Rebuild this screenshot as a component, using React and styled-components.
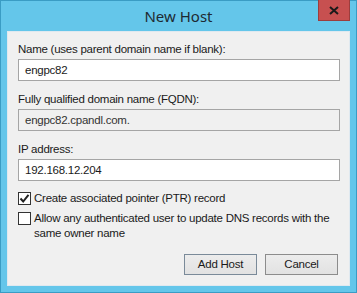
import React from 'react';
import styled, { createGlobalStyle } from 'styled-components';

const GlobalStyle = createGlobalStyle`
    html, body {
        margin: 0;
        padding: 0;
        background: #ffffff;
    }
`;

const font = `"Liberation Sans", Arial, sans-serif`;
const titleFont = `"Noto Sans", "Open Sans", sans-serif`;

const Window = styled.div`
    box-sizing: border-box;
    width: 357px;
    height: 293px;
    background: #64c6ea;
    border: 1px solid #3a9cc4;
    display: flex;
    flex-direction: column;
    font-family: ${font};
    font-size: 11.5px;
    letter-spacing: -0.25px;
`;

const TitleBar = styled.div`
    position: relative;
    height: 30px;
    flex: none;
    display: flex;
    align-items: center;
    justify-content: center;
`;

const Title = styled.div`
    font-family: ${titleFont};
    font-size: 15px;
    letter-spacing: 0;
    color: #1e2a33;
    margin-top: -1px;
`;

const CloseButton = styled.div`
    position: absolute;
    top: -1px;
    right: 6px;
    width: 32px;
    height: 21px;
    background: #c75050;
    border: 1px solid #9c3d3d;
    border-top: none;
    box-sizing: border-box;
    display: flex;
    align-items: center;
    justify-content: center;
`;

const Client = styled.div`
    flex: 1;
    margin: 0 6px 6px 6px;
    background: #f0f0f0;
    border: 1px solid #dfe9f0;
    padding: 10px 9px 0 10px;
    display: flex;
    flex-direction: column;
`;

const Label = styled.div`
    line-height: 15px;
    color: #1a1a1a;
    margin-top: ${p => p.$first ? '0' : '11px'};
    margin-bottom: 2px;
`;

const Input = styled.div`
    box-sizing: border-box;
    height: 22px;
    border: 1px solid #a5a5a5;
    background: ${p => p.$disabled ? '#f0f0f0' : '#ffffff'};
    padding: 0 6px;
    line-height: 20px;
    color: ${p => p.$disabled ? '#333' : '#1a1a1a'};
`;

const CheckRow = styled.div`
    display: flex;
    align-items: flex-start;
    gap: 3px;
    margin-top: ${p => p.$gap}px;
`;

const Box = styled.div`
    box-sizing: border-box;
    width: 13px;
    height: 13px;
    margin-top: 1px;
    flex: none;
    border: 1px solid #333333;
    background: #ffffff;
    display: flex;
    align-items: center;
    justify-content: center;
`;

const CheckText = styled.div`
    line-height: 15px;
    color: #1a1a1a;
`;

const ButtonRow = styled.div`
    display: flex;
    justify-content: flex-end;
    gap: 8px;
    margin-top: 13px;
    padding-right: 2px;
`;

const Button = styled.div`
    box-sizing: border-box;
    width: 73px;
    height: 21px;
    border: 1px solid ${p => p.$default ? '#7a8a99' : '#8c8c8c'};
    background: linear-gradient(#ececec, #e2e2e2);
    line-height: 19px;
    text-align: center;
    color: #1a1a1a;
`;

const Check = () => (
    <svg width="11" height="11" viewBox="0 0 11 11">
        <path d="M1.5 5.5 L4.2 8.5 L9.5 1.8" fill="none" stroke="#222" strokeWidth="2" />
    </svg>
);

export default function App() {
    return (
        <>
            <GlobalStyle />
            <Window>
                <TitleBar>
                    <Title>New Host</Title>
                    <CloseButton>
                        <svg width="10" height="9" viewBox="0 0 10 9">
                            <path d="M1 1 L9 8 M9 1 L1 8" stroke="#1a1a1a" strokeWidth="2" />
                        </svg>
                    </CloseButton>
                </TitleBar>
                <Client>
                    <Label $first>Name (uses parent domain name if blank):</Label>
                    <Input>engpc82</Input>
                    <Label>Fully qualified domain name (FQDN):</Label>
                    <Input $disabled>engpc82.cpandl.com.</Input>
                    <Label>IP address:</Label>
                    <Input>192.168.12.204</Input>
                    <CheckRow $gap={10}>
                        <Box><Check /></Box>
                        <CheckText>Create associated pointer (PTR) record</CheckText>
                    </CheckRow>
                    <CheckRow $gap={5}>
                        <Box />
                        <CheckText>Allow any authenticated user to update DNS records with the same owner name</CheckText>
                    </CheckRow>
                    <ButtonRow>
                        <Button $default>Add Host</Button>
                        <Button>Cancel</Button>
                    </ButtonRow>
                </Client>
            </Window>
        </>
    );
}
